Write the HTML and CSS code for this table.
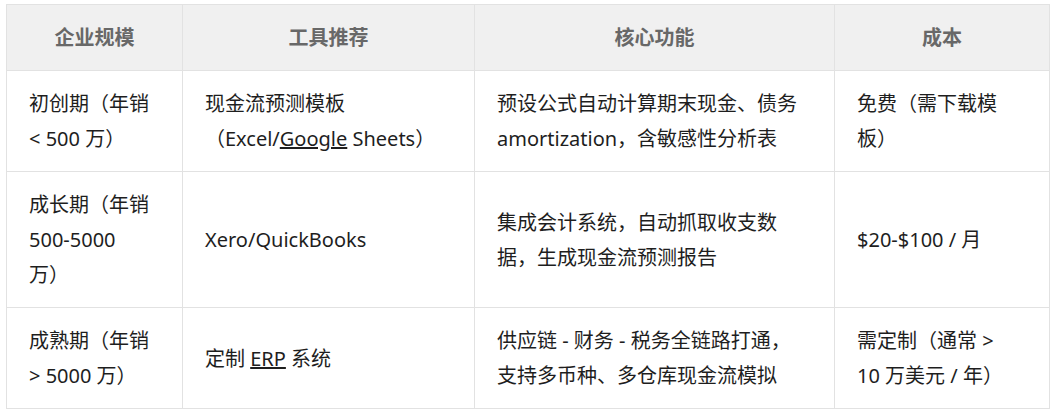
FILE: index.html
```html
<!DOCTYPE html>
<html lang="zh-CN">
<head>
<meta charset="utf-8">
<title>工具推荐</title>
<link rel="stylesheet" href="styles.css">
</head>
<body>
<div class="wrap">
  <table class="tools">
    <colgroup>
      <col class="c1">
      <col class="c2">
      <col class="c3">
      <col class="c4">
    </colgroup>
    <thead>
      <tr>
        <th>企业规模</th>
        <th>工具推荐</th>
        <th>核心功能</th>
        <th>成本</th>
      </tr>
    </thead>
    <tbody>
      <tr>
        <td>初创期（年销 &lt; 500 万）</td>
        <td>现金流预测模板（Excel/<a class="lnk" href="#">Google</a> Sheets）</td>
        <td>预设公式自动计算期末现金、债务amortization，含敏感性分析表</td>
        <td>免费（需下载模板）</td>
      </tr>
      <tr>
        <td>成长期（年销 500-5000 万）</td>
        <td>Xero/QuickBooks</td>
        <td>集成会计系统，自动抓取收支数据，生成现金流预测报告</td>
        <td>$20-$100 / 月</td>
      </tr>
      <tr>
        <td>成熟期（年销 &gt; 5000 万）</td>
        <td>定制 <a class="lnk" href="#">ERP</a> 系统</td>
        <td>供应链 - 财务 - 税务全链路打通，支持多币种、多仓库现金流模拟</td>
        <td>需定制（通常 &gt; 10 万美元 / 年）</td>
      </tr>
    </tbody>
  </table>
</div>
</body>
</html>
```
FILE: styles.css
```css
html, body {
  margin: 0;
  padding: 0;
  background: #ffffff;
}

.wrap {
  padding: 4px 6px;
}

.tools {
  border-collapse: collapse;
  table-layout: fixed;
  width: 1043px;
  font-family: "Noto Sans", "Noto Sans CJK SC", sans-serif;
  font-size: 20px;
  line-height: 35px;
  color: #1e1e1e;
}

.c1 { width: 176px; }
.c2 { width: 292px; }
.c3 { width: 360px; }
.c4 { width: 215px; }

.tools th,
.tools td {
  border: 1px solid #e2e2e2;
  vertical-align: middle;
}

.tools th {
  background: #f0f0f0;
  color: #686868;
  font-weight: 700;
  text-align: center;
  padding: 15px 22px;
}

.tools td {
  text-align: left;
  padding: 15px 32px 15px 22px;
}

.lnk {
  color: inherit;
  text-decoration: underline;
}
```
